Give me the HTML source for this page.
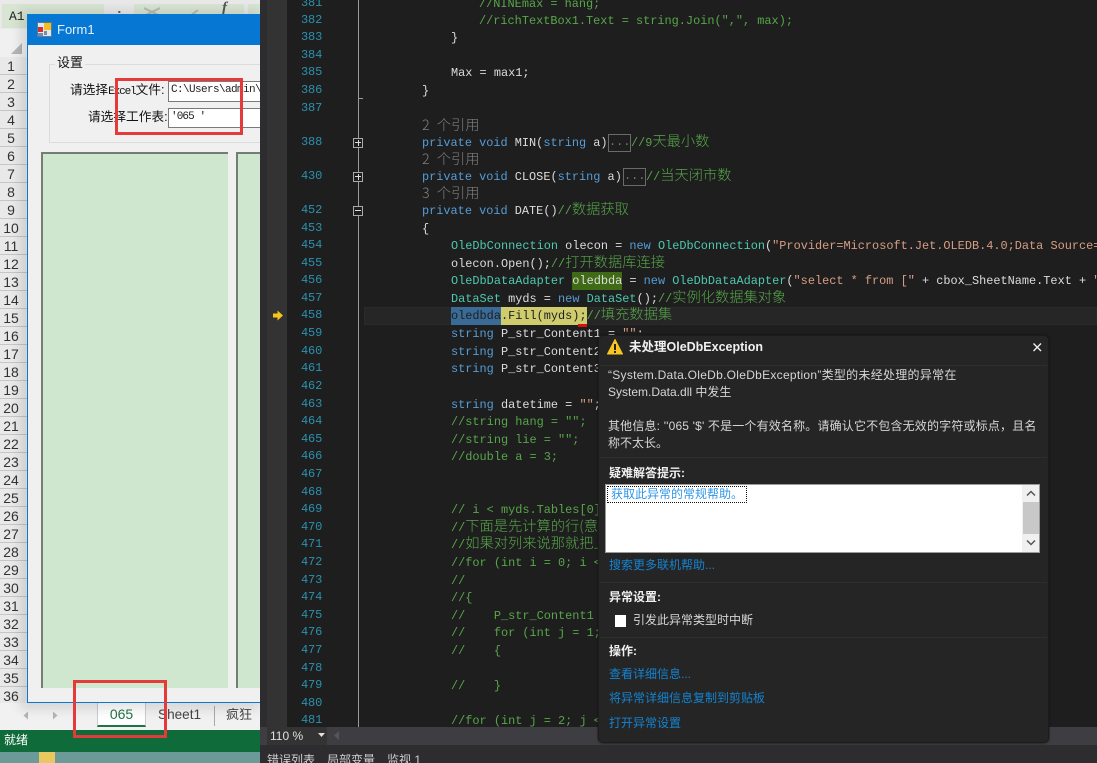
<!DOCTYPE html>
<html lang="zh"><head><meta charset="utf-8"><title>Form1</title>
<style>
html,body{margin:0;padding:0;background:#1e1e1e}
#p{position:relative;width:1097px;height:763px;overflow:hidden;font-family:"Liberation Sans","Noto Sans CJK SC",sans-serif}
#p div{position:absolute;box-sizing:border-box;white-space:pre}
.r{left:0;width:27px;height:18px;border-bottom:1px solid #c6c6c6;color:#333;font-size:14px;line-height:18px;text-align:center;padding-right:5px}
#vs{left:260px;top:0;width:837px;height:763px;background:#1e1e1e;overflow:hidden}
.n{left:41px;width:21px;color:#2b91af;font:12px/18px "Liberation Mono",monospace;text-align:left;letter-spacing:-.15px}
.l{font:11.9px/18px "Liberation Mono","Noto Sans CJK SC",monospace;color:#dcdcdc;white-space:pre;margin-top:1px}
.c{font-family:"Noto Sans CJK SC",sans-serif;font-size:14.25px;font-weight:300;color:#57a64a;line-height:0}
.g{color:#57a64a}.k{color:#569cd6}.t{color:#4ec9b0}.s{color:#d69d85}
.ref{font:300 14.25px/18px "Noto Sans CJK SC",sans-serif;color:#808080;left:162px;word-spacing:4px}
.f{left:93px;width:10px;height:10px;border:1px solid #aaa;background:#1e1e1e}
.f i{position:absolute;left:1px;top:3px;width:6px;height:1px;background:#ddd}
.f b{position:absolute;left:3.5px;top:1px;width:1px;height:6px;background:#ddd}
.d{font-size:12px;line-height:17px;color:#d6d6d6}
.h{font-size:12px;line-height:17px;color:#f0f0f0;font-weight:700;left:10px}
.a{font-size:12px;line-height:17px;color:#1583cf;left:11px}
.sep{left:1px;right:1px;height:1px;background:#2e2e2f}
.red{border:3px solid #e53a3a}
</style></head><body><div id="p">

<!-- Excel -->
<div style="left:0;top:0;width:260px;height:730px;background:#e9e9e9"></div>
<div style="left:2px;top:4px;width:102px;height:24px;background:#d9e5d3;font:13px/26px 'Liberation Mono',monospace;color:#222;padding-left:7px">A1</div>
<div style="left:117px;top:4px;color:#555;font-size:14px;line-height:18px;font-weight:700">:</div>
<div style="left:134px;top:4px;width:110px;height:24px;background:#d9e5d3"></div>
<svg style="position:absolute;left:140px;top:4px" width="100" height="12"><path d="M4 4 20 12M20 4 4 12" stroke="#b4bdb0" stroke-width="2"/><path d="M50 12 58 6" stroke="#b4bdb0" stroke-width="2"/></svg>
<div style="left:222px;top:0;color:#555;font:italic 700 15px/16px 'Liberation Serif',serif">f</div>
<div style="left:248px;top:4px;width:12px;height:24px;background:#d9e5d3"></div>
<div style="left:0;top:29px;width:260px;height:28px;background:#f0f0f0"></div>
<svg style="position:absolute;left:10px;top:42px" width="14" height="13"><path d="M12 1V12H1Z" fill="#b5b5b5"/></svg>
<div class="r" style="top:57px">1</div><div class="r" style="top:75px">2</div><div class="r" style="top:93px">3</div><div class="r" style="top:111px">4</div><div class="r" style="top:129px">5</div><div class="r" style="top:147px">6</div><div class="r" style="top:165px">7</div><div class="r" style="top:183px">8</div><div class="r" style="top:201px">9</div><div class="r" style="top:219px">10</div><div class="r" style="top:237px">11</div><div class="r" style="top:255px">12</div><div class="r" style="top:273px">13</div><div class="r" style="top:291px">14</div><div class="r" style="top:309px">15</div><div class="r" style="top:327px">16</div><div class="r" style="top:345px">17</div><div class="r" style="top:363px">18</div><div class="r" style="top:381px">19</div><div class="r" style="top:399px">20</div><div class="r" style="top:417px">21</div><div class="r" style="top:435px">22</div><div class="r" style="top:453px">23</div><div class="r" style="top:471px">24</div><div class="r" style="top:489px">25</div><div class="r" style="top:507px">26</div><div class="r" style="top:525px">27</div><div class="r" style="top:543px">28</div><div class="r" style="top:561px">29</div><div class="r" style="top:579px">30</div><div class="r" style="top:597px">31</div><div class="r" style="top:615px">32</div><div class="r" style="top:633px">33</div><div class="r" style="top:651px">34</div><div class="r" style="top:669px">35</div><div class="r" style="top:687px">36</div>

<!-- tab bar -->
<div style="left:0;top:703px;width:260px;height:27px;background:#f1f1f1"></div>
<svg style="position:absolute;left:22px;top:710px" width="40" height="11"><path d="M6 1.5V9.5L1.5 5.5Z" fill="#b4b4b4"/><path d="M31 1.5V9.5L35.500 5.500Z" fill="#b4b4b4"/></svg>
<div style="left:97px;top:703px;width:49px;height:24px;background:#fff;border-left:1px solid #ccc;border-right:1px solid #ccc;border-bottom:2px solid #217346;color:#217346;font-size:14px;line-height:22px;text-align:center">065</div>
<div style="left:158px;top:705px;color:#444;font-size:13.600px;line-height:19px">Sheet1</div>
<div style="left:214px;top:706px;width:1px;height:20px;background:#aaa"></div>
<div style="left:226px;top:705px;color:#444;font-size:13px;line-height:19px">疯狂</div>
<div style="left:0;top:730px;width:260px;height:22px;background:#0f6b3a;color:#fff;font-size:12px;line-height:20px;padding-left:4px">就绪</div>
<div style="left:0;top:752px;width:260px;height:11px;background:#6c9a99"></div>
<div style="left:39px;top:752px;width:16px;height:11px;background:#e8c95f"></div>

<!-- Form -->
<div style="left:20px;top:10px;width:240px;height:700px;background:rgba(0,0,0,.10);filter:blur(5px)"></div>
<div style="left:27px;top:14px;width:240px;height:689px;background:#f0f0f0;border:1px solid #0a78d2;border-top:0"></div>
<div style="left:27px;top:14px;width:240px;height:31px;background:#0678d4;color:#e6f1fb;font-size:13px;line-height:31px;padding-left:30px">Form1</div>
<svg style="position:absolute;left:37px;top:22px" width="15" height="15"><rect x=".5" y=".5" width="14" height="14" fill="#dfe8f0" stroke="#5a7a9a"/><rect x="7" y="1" width="7" height="7" fill="#f0c020"/><rect x="1" y="5" width="5" height="5" fill="#d03030"/><rect x="7" y="9" width="3" height="4" fill="#7a8aa0"/><rect x="1" y="11" width="5" height="3" fill="#7a8aa0"/></svg>
<div style="left:49px;top:64px;width:220px;height:79px;border:1px solid #dcdcdc"></div>
<div style="left:55px;top:54px;background:#f0f0f0;padding:0 2px;color:#111;font-size:13px;line-height:17px">设置</div>
<div style="left:70px;top:81px;color:#111;font-size:12.700px;line-height:18px">请选择<span style="font:11px 'Liberation Mono',monospace;letter-spacing:-1.100px">Excel</span>文件:</div>
<div style="left:88px;top:108px;color:#111;font-size:12.700px;line-height:18px">请选择工作表:</div>
<div style="left:168px;top:81px;width:100px;height:21px;background:#fff;border:1px solid #7a7a7a;color:#222;font:11px/17px 'Liberation Mono',monospace;padding-left:2px;letter-spacing:-.6px;overflow:hidden">C:\Users\admin\D</div>
<div style="left:168px;top:108px;width:100px;height:20px;background:#fff;border:1px solid #7a7a7a;color:#222;font:11px/16px 'Liberation Mono',monospace;padding-left:2px;letter-spacing:-.9px">'065 '</div>
<div style="left:41px;top:152px;width:187px;height:536px;background:#cfe6cf;border-left:2px solid #737d73;border-top:2px solid #737d73"></div>
<div style="left:236px;top:152px;width:30px;height:536px;background:#cfe6cf;border-left:2px solid #737d73;border-top:2px solid #737d73"></div>

<!-- red annotations -->
<div class="red" style="left:115px;top:78px;width:128px;height:57px"></div>
<div class="red" style="left:73px;top:680px;width:94px;height:58px"></div>

<!-- VS -->
<div id="vs">
<div style="left:0;top:0;width:7px;height:763px;background:#2d2d30"></div>
<div style="left:7px;top:0;width:20px;height:727px;background:#333"></div>
<div style="left:98px;top:0;width:1px;height:727px;background:#9a9a9a"></div>
<div style="left:98px;top:98px;width:5px;height:1px;background:#9a9a9a"></div>

<div style="left:104px;top:307px;width:733px;height:18px;background:#262626;border:1px solid #2a2a2a"></div>
<div style="left:191px;top:307px;width:50px;height:18px;background:#3a6a96"></div>
<div style="left:241px;top:307px;width:86px;height:18px;background:#cfcc6e"></div>
<div style="left:312px;top:272px;width:50px;height:18px;background:#3f6b16"></div>
<div style="left:318px;top:324px;width:9px;height:3px;background:#d81010"></div>

<svg style="position:absolute;left:12px;top:310px" width="12" height="11"><path d="M1 3.500H5.500V.5L11 5.500 5.500 10.500V7.500H1Z" fill="#f5c518"/></svg>

<div class="n" style="top:-6px">381</div><div class="n" style="top:11px">382</div><div class="n" style="top:28px">383</div><div class="n" style="top:46px">384</div><div class="n" style="top:63px">385</div><div class="n" style="top:81px">386</div><div class="n" style="top:99px">387</div><div class="n" style="top:133px">388</div><div class="n" style="top:167px">430</div><div class="n" style="top:201px">452</div><div class="n" style="top:219px">453</div><div class="n" style="top:236px">454</div><div class="n" style="top:254px">455</div><div class="n" style="top:271px">456</div><div class="n" style="top:289px">457</div><div class="n" style="top:306px">458</div><div class="n" style="top:324px">459</div><div class="n" style="top:342px">460</div><div class="n" style="top:359px">461</div><div class="n" style="top:377px">462</div><div class="n" style="top:395px">463</div><div class="n" style="top:412px">464</div><div class="n" style="top:430px">465</div><div class="n" style="top:447px">466</div><div class="n" style="top:465px">467</div><div class="n" style="top:483px">468</div><div class="n" style="top:500px">469</div><div class="n" style="top:518px">470</div><div class="n" style="top:535px">471</div><div class="n" style="top:553px">472</div><div class="n" style="top:571px">473</div><div class="n" style="top:588px">474</div><div class="n" style="top:606px">475</div><div class="n" style="top:623px">476</div><div class="n" style="top:641px">477</div><div class="n" style="top:659px">478</div><div class="n" style="top:676px">479</div><div class="n" style="top:694px">480</div><div class="n" style="top:711px">481</div>

<div class="f" style="top:138px"><i></i><b></b></div>
<div class="f" style="top:172px"><i></i><b></b></div>
<div class="f" style="top:206px"><i></i></div>

<div class="l g" style="left:219px;top:-6px">//NINEmax = hang;</div>
<div class="l g" style="left:219px;top:11px">//richTextBox1.Text = string.Join(",", max);</div>
<div class="l" style="left:191px;top:28px">}</div>
<div class="l" style="left:191px;top:63px">Max = max1;</div>
<div class="l" style="left:162px;top:81px">}</div>
<div class="ref" style="top:116px">2 个引用</div>
<div class="l" style="left:162px;top:133px"><span class="k">private void</span> MIN(<span class="k">string</span> a)</div>
<div style="left:348px;top:134px;width:23px;height:18px;border:1px solid #6a6a6a;color:#777;font:11.900px/15px 'Liberation Mono',monospace;text-align:center">...</div>
<div class="l" style="left:371px;top:133px"><span class="g">//9</span><span class="c">天最小数</span></div>
<div class="ref" style="top:150px">2 个引用</div>
<div class="l" style="left:162px;top:167px"><span class="k">private void</span> CLOSE(<span class="k">string</span> a)</div>
<div style="left:363px;top:168px;width:23px;height:18px;border:1px solid #6a6a6a;color:#777;font:11.900px/15px 'Liberation Mono',monospace;text-align:center">...</div>
<div class="l" style="left:386px;top:167px"><span class="g">//</span><span class="c">当天闭市数</span></div>
<div class="ref" style="top:184px">3 个引用</div>
<div class="l" style="left:162px;top:201px"><span class="k">private void</span> DATE()<span class="g">//</span><span class="c">数据获取</span></div>
<div class="l" style="left:162px;top:219px">{</div>
<div class="l" style="left:191px;top:236px"><span class="t">OleDbConnection</span> olecon = <span class="k">new</span> <span class="t">OleDbConnection</span>(<span class="s">"Provider=Microsoft.Jet.OLEDB.4.0;Data Source="</span></div>
<div class="l" style="left:191px;top:254px">olecon.Open();<span class="g">//</span><span class="c">打开数据库连接</span></div>
<div class="l" style="left:191px;top:271px"><span class="t">OleDbDataAdapter</span> oledbda = <span class="k">new</span> <span class="t">OleDbDataAdapter</span>(<span class="s">"select * from ["</span> + cbox_SheetName.Text + <span class="s">"</span></div>
<div class="l" style="left:191px;top:289px"><span class="t">DataSet</span> myds = <span class="k">new</span> <span class="t">DataSet</span>();<span class="g">//</span><span class="c">实例化数据集对象</span></div>
<div class="l" style="left:191px;top:306px;color:#1e1e1e">oledbda.Fill(myds);<span class="g">//</span><span class="c">填充数据集</span></div>
<div class="l" style="left:191px;top:324px"><span class="k">string</span> P_str_Content1 = <span class="s">""</span>;</div>
<div class="l" style="left:191px;top:342px"><span class="k">string</span> P_str_Content2 = <span class="s">""</span>;</div>
<div class="l" style="left:191px;top:359px"><span class="k">string</span> P_str_Content3 = <span class="s">""</span>;</div>
<div class="l" style="left:191px;top:395px"><span class="k">string</span> datetime = <span class="s">""</span>;</div>
<div class="l g" style="left:191px;top:412px">//string hang = "";</div>
<div class="l g" style="left:191px;top:430px">//string lie = "";</div>
<div class="l g" style="left:191px;top:447px">//double a = 3;</div>
<div class="l g" style="left:191px;top:500px">// i &lt; myds.Tables[0].Rows.Count</div>
<div class="l g" style="left:191px;top:518px">//<span class="c">下面是先计算的行(意思</span></div>
<div class="l g" style="left:191px;top:535px">//<span class="c">如果对列来说那就把上面</span></div>
<div class="l g" style="left:191px;top:553px">//for (int i = 0; i &lt; myds</div>
<div class="l g" style="left:191px;top:571px">//</div>
<div class="l g" style="left:191px;top:588px">//{</div>
<div class="l g" style="left:191px;top:606px">//    P_str_Content1 = "";</div>
<div class="l g" style="left:191px;top:623px">//    for (int j = 1; j &lt;</div>
<div class="l g" style="left:191px;top:641px">//    {</div>
<div class="l g" style="left:191px;top:676px">//    }</div>
<div class="l g" style="left:191px;top:711px">//for (int j = 2; j &lt; myds</div>

<!-- bottom -->
<div style="left:0;top:727px;width:837px;height:18px;background:#3e3e42"></div>
<div style="left:7px;top:727px;width:60px;height:18px;background:#333;color:#e0e0e0;font-size:12px;line-height:18px;padding-left:3px">110 %</div>
<svg style="position:absolute;left:58px;top:733px" width="8" height="5"><path d="M0 0H7L3.500 4Z" fill="#e0e0e0"/></svg>
<svg style="position:absolute;left:73px;top:731px" width="8" height="10"><path d="M6 0V9L1 4.500Z" fill="#55555a"/></svg>
<div style="left:0;top:745px;width:837px;height:18px;background:#2d2d30"></div>
<div style="left:7px;top:750px;color:#d0d0d0;font-size:12px;line-height:20px">错误列表</div>
<div style="left:67px;top:750px;color:#d0d0d0;font-size:12px;line-height:20px">局部变量</div>
<div style="left:127px;top:750px;color:#d0d0d0;font-size:12px;line-height:20px">监视 1</div>

<!-- Exception dialog -->
<div style="left:338px;top:335px;width:451px;height:408px;background:#252526;border:1px solid #1c1c1c;border-radius:5px;box-shadow:0 0 2px #111">
<svg style="position:absolute;left:8px;top:3px" width="16" height="16"><path d="M8 .5 15.500 15H.5Z" fill="#f8c61e" stroke="#f8c61e" stroke-linejoin="round"/><rect x="7" y="5" width="2" height="6" fill="#222"/><rect x="7" y="12" width="2" height="2" fill="#222"/></svg>
<div style="left:30px;top:2px;color:#f0f0f0;font-size:12.500px;line-height:18px;font-weight:700">未处理OleDbException</div>
<svg style="position:absolute;left:434px;top:7px" width="9" height="9"><path d="M.5 .5 8 8M8 .5 .5 8" stroke="#f0f0f0" stroke-width="1.400"/></svg>
<div class="sep" style="top:29px"></div>
<div class="d" style="left:9px;top:31px;letter-spacing:.28px">“System.Data.OleDb.OleDbException”类型的未经处理的异常在</div>
<div class="d" style="left:9px;top:48px">System.Data.dll 中发生</div>
<div class="d" style="left:9px;top:82px;letter-spacing:.17px">其他信息: ''065 '$' 不是一个有效名称。请确认它不包含无效的字符或标点，且名</div>
<div class="d" style="left:9px;top:99px">称不太长。</div>
<div class="sep" style="top:121px"></div>
<div class="h" style="top:129px">疑难解答提示:</div>
<div style="left:6px;top:148px;width:435px;height:69px;background:#fff;border:1px solid #9a9a9a">
<div style="left:1px;top:1px;width:140px;height:17px;border:1px dotted #111;color:#2f96e8;font-size:12px;line-height:15px;padding-left:3px">获取此异常的常规帮助。</div>
<div style="right:0;top:0;width:17px;height:67px;background:#f0f0f0"></div>
<div style="right:0;top:17px;width:16px;height:32px;background:#c8c8c8"></div>
<svg style="position:absolute;right:3px;top:5px" width="10" height="7"><path d="M1 5.500 5 1.500 9 5.500" fill="none" stroke="#555" stroke-width="1.500"/></svg>
<svg style="position:absolute;right:3px;top:54px" width="10" height="7"><path d="M1 1.500 5 5.500 9 1.500" fill="none" stroke="#555" stroke-width="1.500"/></svg>
</div>
<div class="a" style="left:10px;top:221px">搜索更多联机帮助...</div>
<div class="sep" style="top:246px"></div>
<div class="h" style="left:10px;top:253px">异常设置:</div>
<div style="left:16px;top:279px;width:11px;height:12px;background:#fff"></div>
<div class="d" style="left:34px;top:276px">引发此异常类型时中断</div>
<div class="sep" style="top:301px"></div>
<div class="h" style="left:10px;top:307px">操作:</div>
<div class="a" style="left:10px;top:330px">查看详细信息...</div>
<div class="a" style="left:10px;top:354px">将异常详细信息复制到剪贴板</div>
<div class="a" style="left:10px;top:379px">打开异常设置</div>
</div>
</div>
</div></body></html>
